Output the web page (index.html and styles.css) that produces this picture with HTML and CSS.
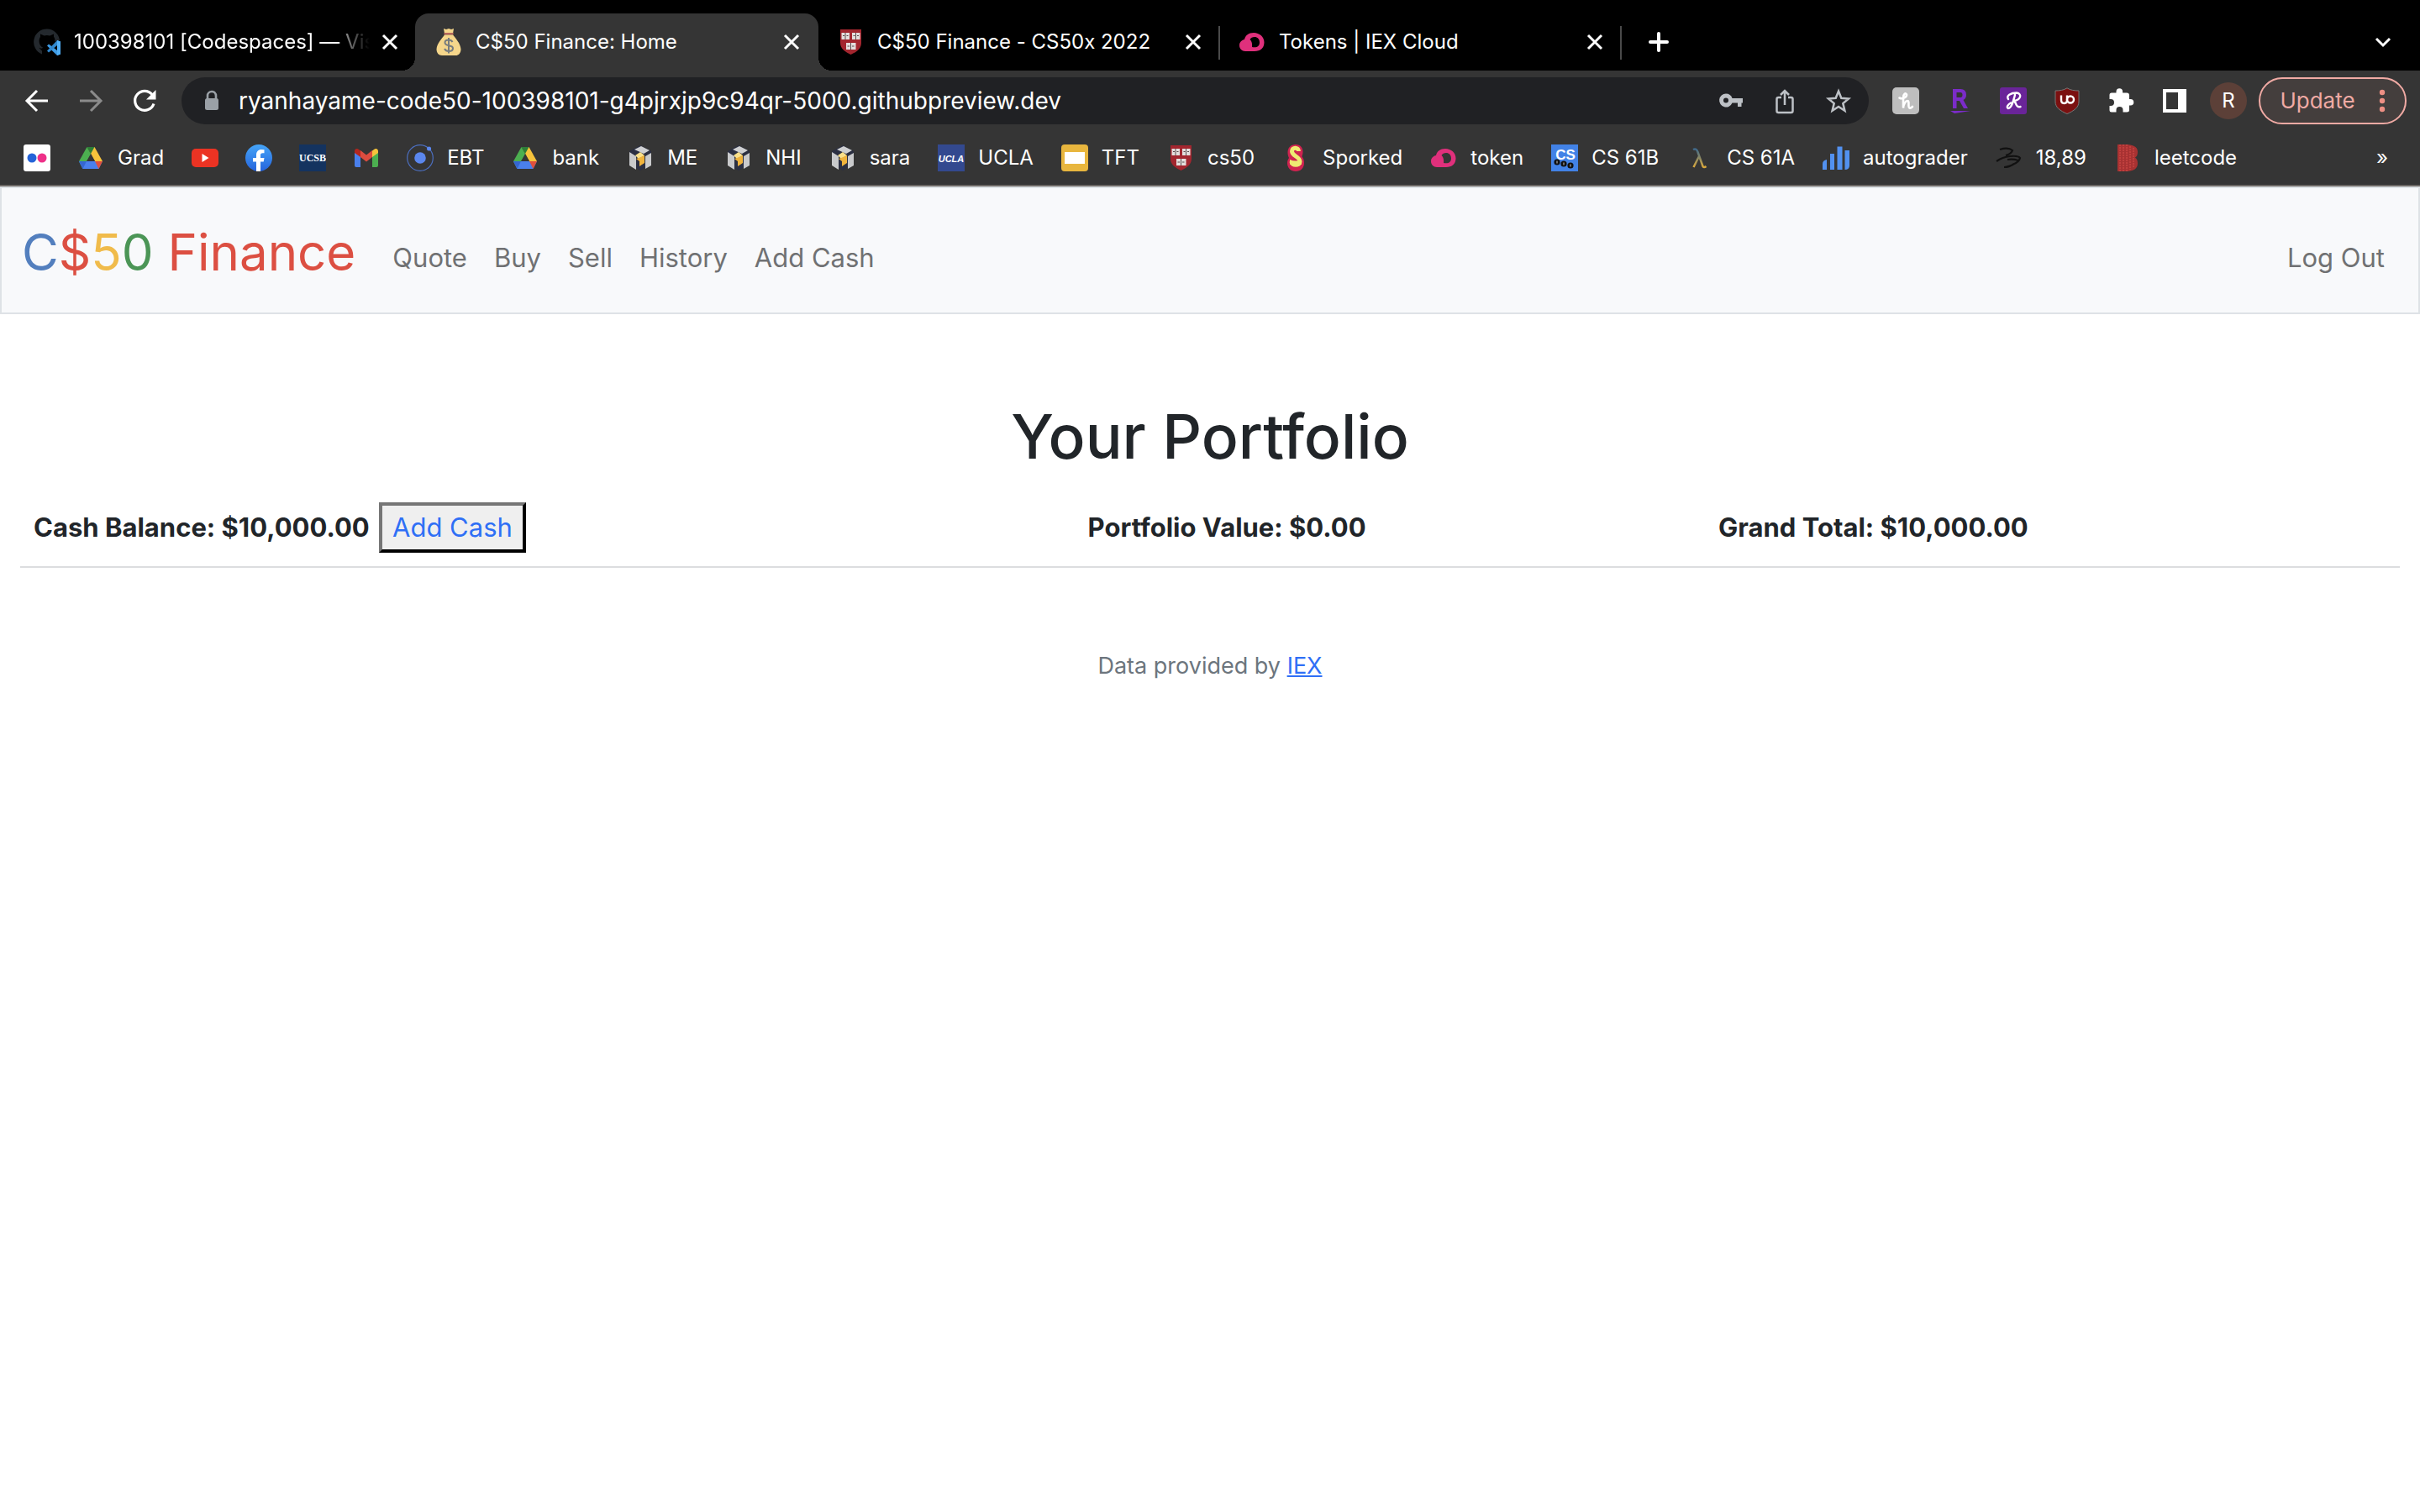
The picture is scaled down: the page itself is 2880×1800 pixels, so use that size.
FILE: index.html
```html
<!DOCTYPE html>
<html lang="en">
<head>
<meta charset="utf-8">
<title>C$50 Finance: Home</title>
<link rel="stylesheet" href="styles.css">
</head>
<body>
<svg class="sprite" aria-hidden="true">
  <symbol id="i-close" viewBox="0 0 32 32"><path d="M8 8l16 16M24 8L8 24" stroke="currentColor" stroke-width="3" fill="none"/></symbol>
  <symbol id="i-drive" viewBox="0 0 32 32"><path d="M11.500 3L2 20l4.500 9L16 11z" fill="#4caf50"/><path d="M20.500 3L30 20H21L12 3z" fill="#f6c33c"/><path d="M11.500 3h9L16 11z" fill="#2c7d37"/><path d="M2 20h28l-4.500 9h-19z" fill="#4a80ec"/><path d="M2 20h9l-4.500 9z" fill="#3566d0"/><path d="M21 20h9l-4.500 9z" fill="#e0503c"/><path d="M16 12l-5 8h10z" fill="#353535"/></symbol>
  <symbol id="i-box" viewBox="0 0 32 32"><path d="M16 1l13 7v15l-13 8-13-8V8z" fill="#2b2f42"/><path d="M3 9l8 5v16l-8-5z" fill="#c9cacc"/><path d="M9 6l8-4 10 5-7 4z" fill="#cfd0d2"/><path d="M22 14l7-4v15l-7 4z" fill="#c9cacc"/><path d="M10 13l6-4 5 4-5 3v3z" fill="#fbe08a"/><path d="M14 16l7-3v9l-6 4v-6l-4-3z" fill="#f0b33c"/></symbol>
  <symbol id="i-shield" viewBox="0 0 32 32"><path d="M4 1h25v16c0 7-6 11-12.500 14C10 28 4 24 4 17z" fill="#a3262f"/><g fill="#e4dedd"><path d="M5.500 5h9.500v8H5.500zM18 5h9.500v8H18zM11 17h11.500v8H11z"/></g><g stroke="#5a4a4c" stroke-width="1" fill="none"><path d="M10 5v8M22.500 5v8M16.500 17v8M7 8.500h2M11.500 8.500h2M19.500 8.500h2M24 8.500h2M12.500 21h2.500M18 21h2.500"/></g></symbol>
  <symbol id="i-iex" viewBox="0 0 32 32"><path d="M18 5c7 0 12.500 5 12.500 11.500S26 27 19 27H8c-4 0-7-3-7-7s3-6.500 6-7C8 8 12 5 18 5zM19 10c-2.500 0-4.500 1-5.500 3 2 2 3 4 2.500 9 6 1 9-1 9-5.500 0-4-2.500-6.500-6-6.500z" fill="#e0307c" fill-rule="evenodd"/></symbol>
</svg>

<header class="browser">
  <div class="tabs">
    <div class="tab">
      <svg class="icon" viewBox="0 0 32 32"><path d="M10 30.500A15.500 15.500 0 1 1 31 14l-6 1c1-2 0-4-1-5V6.500l-4.500 2q-4-1-7 0L8 6.500V10c-3 4-1 11 3 12.500-1 2-3 1-5 0l4 4z" fill="#24292e"/><path d="M28 14l4 1.500v15L28 32 16 20.500l2-2L28 26z" fill="#3d9ae4"/><path d="M28 14v6l-10 8.500-2-2z" fill="#2f86cc"/><path d="M28 14l4 1.500v15L28 32z" fill="#50aef5"/></svg>
      <span class="tab-title fade">100398101 [Codespaces] — Vis</span>
      <button class="tab-close" aria-label="Close tab"><svg class="icon"><use href="#i-close"/></svg></button>
    </div>
    <div class="tab active">
      <svg class="icon" viewBox="0 0 32 32"><path d="M10 0l3 1 3-1 3 1 3-1-1 6H11z" fill="#f5d68b"/><path d="M10.500 5h11v2.500h-11z" fill="#b5655b"/><path d="M11 7.500h10c3 4 9 10 9.500 17 0 5-3 7.500-6 7.500H8c-4 0-6.500-3-6.500-7.500C2 17.500 8 12 11 7.500z" fill="#f5d68b"/><path d="M20.500 16c-1-2-2.500-2.500-4.500-2.500-2.500 0-4.500 1-4.500 3.200 0 5 9.500 2 9.500 6.800 0 2-2 3.500-5 3.500-2.500 0-4-1-5-3M16 11v18.500" fill="none" stroke="#777c7e" stroke-width="2"/></svg>
      <span class="tab-title">C$50 Finance: Home</span>
      <button class="tab-close" aria-label="Close tab"><svg class="icon"><use href="#i-close"/></svg></button>
    </div>
    <div class="tab">
      <svg class="icon"><use href="#i-shield"/></svg>
      <span class="tab-title">C$50 Finance - CS50x 2022</span>
      <button class="tab-close" aria-label="Close tab"><svg class="icon"><use href="#i-close"/></svg></button>
    </div>
    <div class="tab divided">
      <svg class="icon"><use href="#i-iex"/></svg>
      <span class="tab-title">Tokens | IEX Cloud</span>
      <button class="tab-close" aria-label="Close tab"><svg class="icon"><use href="#i-close"/></svg></button>
    </div>
    <button class="new-tab" aria-label="New tab"><svg class="icon" viewBox="0 0 32 32"><path d="M16 6v20M6 16h20" stroke="#fff" stroke-width="4" stroke-linecap="round"/></svg></button>
    <button class="tab-search" aria-label="Search tabs"><svg class="icon" viewBox="0 0 32 32"><path d="M8 12l8 8 8-8" stroke="#fff" stroke-width="3" fill="none"/></svg></button>
  </div>

  <div class="toolbar">
    <div class="tools">
      <button aria-label="Back"><svg class="icon" viewBox="0 0 32 32"><path d="M29 16H5M16 4L4 16l12 12" stroke="#fff" stroke-width="3" fill="none"/></svg></button>
      <button aria-label="Forward"><svg class="icon" viewBox="0 0 32 32"><path d="M3 16h24M16 4l12 12-12 12" stroke="#8b8b8b" stroke-width="3" fill="none"/></svg></button>
      <button aria-label="Reload"><svg class="icon" viewBox="0 0 32 32"><path d="M25 8.500A11.500 11.500 0 1 0 27 19.500" stroke="#fff" stroke-width="3.200" fill="none"/><path d="M29.500 3v11.500H18z" fill="#fff"/></svg></button>
    </div>
    <label class="omnibox">
      <svg class="icon" viewBox="0 0 32 32"><path d="M11 14V10a5 5 0 0 1 10 0V14" stroke="#9aa0a6" stroke-width="2.600" fill="none"/><rect x="8" y="13" width="16" height="14" rx="2.500" fill="#9aa0a6"/></svg>
      <input class="address" type="text" aria-label="Address" value="ryanhayame-code50-100398101-g4pjrxjp9c94qr-5000.githubpreview.dev">
      <span class="tools">
        <button aria-label="Passwords"><svg class="icon" viewBox="0 0 32 32"><path d="M10 7.500a8 8 0 0 1 7.500 5.500H30v5.500h-1.500V23H24v-4.500h-6.500A8 8 0 1 1 10 7.500zm0 5a3 3 0 1 0 0 6 3 3 0 0 0 0-6z" fill="#bdc1c6" fill-rule="evenodd"/></svg></button>
        <button aria-label="Share"><svg class="icon" viewBox="0 0 32 32"><path d="M12 12H8.500Q6.500 12 6.500 14v14q0 2 2 2h15q2 0 2-2V14q0-2-2-2H20M16 21V4.500M11 9l5-5 5 5" stroke="#bdc1c6" stroke-width="2.500" fill="none"/></svg></button>
        <button aria-label="Bookmark this tab"><svg class="icon" viewBox="0 0 32 32"><path d="M16 4.500l3.300 8.200 8.700.7-6.700 5.700 2.100 8.600L16 23l-7.400 4.700 2.100-8.600L4 13.400l8.700-.7z" stroke="#bdc1c6" stroke-width="2.500" fill="none"/></svg></button>
      </span>
    </label>
    <div class="tools">
      <button aria-label="Honey"><svg class="icon" viewBox="0 0 32 32"><rect width="32" height="32" rx="5" fill="#bebebe"/><path d="M8.500 12.500c4 2 9-1 8.500-4-1-2.500-4-1-4 4V24.500c.5-5 3-8.500 5-8.500 3 0 0 7.500 2.500 8.500 1.500.5 2.500-.5 3.500-1.500" stroke="#fff" stroke-width="2.600" fill="none" stroke-linecap="round"/></svg></button>
      <button aria-label="Rakuten"><svg class="icon" viewBox="0 0 32 32"><path d="M8 2h9q7 0 7 7 0 4-3.500 6L26 25h-5l-5-9h-3.500v9H8zm4.500 4v6H17q2.500 0 2.500-3T17 6z" fill="#7b2cc9" fill-rule="evenodd"/><path d="M5 28h24l-19 3z" fill="#7b2cc9"/></svg></button>
      <button aria-label="Rewards"><svg class="icon" viewBox="0 0 32 32"><rect width="32" height="32" rx="3" fill="#6a2499"/><path d="M10 14c-3-4 3-7.500 10-7.500 7 1 5 9-4 9.500 4 0 2 9 8.500 7M18 9c-2 7-4 16-8 16-3-1 0-5 3-6.500" stroke="#fff" stroke-width="2.400" fill="none" stroke-linecap="round"/></svg></button>
      <button aria-label="uBlock Origin"><svg class="icon" viewBox="0 0 32 32"><path d="M16 .8C12 3.500 7 4 2 4v13c0 7 6 11 14 14.500C24 28 30 24 30 17V4c-5 0-10-.5-14-3.200z" fill="#7b1010" stroke="#777" stroke-width="1"/><path d="M9 9.500v5.500q0 4 3.500 4t3.500-4V9.500" stroke="#fff" stroke-width="2.400" fill="none"/><circle cx="20" cy="14.500" r="4" stroke="#fff" stroke-width="2.400" fill="none"/></svg></button>
      <button aria-label="Extensions"><svg class="icon" viewBox="0 0 32 32"><path d="M10.500 6.500V5a3.800 3.800 0 0 1 7.600 0v1.500H23q3 0 3 3v4.500h1.500a3.800 3.800 0 0 1 0 7.600H26V27q0 2.500-3 2.500h-4.500V27a4 4 0 0 0-8 0v2.500H5q-2.500 0-2.500-2.500v-5H4a4 4 0 0 0 0-8H2.500V9q0-2.500 2.500-2.500z" fill="#fff"/></svg></button>
      <button aria-label="Side panel"><svg class="icon" viewBox="0 0 32 32"><path d="M2 2h28v28H2zm4 4v20h14V6z" fill="#fff" fill-rule="evenodd"/></svg></button>
      <button class="avatar" aria-label="Profile">R</button>
    </div>
    <button class="update">Update<svg class="dots" viewBox="0 0 8 28"><circle cx="4" cy="4" r="3.200"/><circle cx="4" cy="14" r="3.200"/><circle cx="4" cy="24" r="3.200"/></svg></button>
  </div>

  <nav class="bookmarks" aria-label="Bookmarks">
    <a href="#" aria-label="Flickr"><svg class="icon" viewBox="0 0 32 32"><rect width="32" height="32" rx="3" fill="#fff"/><circle cx="10" cy="16" r="5.500" fill="#2463d8"/><circle cx="22" cy="16" r="5.500" fill="#ee3088"/></svg></a>
    <a class="named" href="#"><svg class="icon"><use href="#i-drive"/></svg>Grad</a>
    <a href="#" aria-label="YouTube"><svg class="icon" viewBox="0 0 32 32"><rect x="0" y="5" width="32" height="22" rx="5" fill="#eb3323"/><path d="M12.500 11v10l8-5z" fill="#fff"/></svg></a>
    <a href="#" aria-label="Facebook"><svg class="icon" viewBox="0 0 32 32"><defs><linearGradient id="fb" x2="0" y2="1"><stop stop-color="#45a5f8"/><stop offset="1" stop-color="#2563dc"/></linearGradient></defs><circle cx="16" cy="16" r="16" fill="url(#fb)"/><path d="M13 32V20.500H9V16h4v-3.500C13 8.500 15.500 6 19 6l3.500.3v4H20.500c-2 0-2.500 1-2.500 2.500V16h4.500l-.8 4.500H18V32z" fill="#fff"/></svg></a>
    <a href="#" aria-label="UCSB"><svg class="icon" viewBox="0 0 32 32"><rect width="32" height="32" fill="#14335f"/><text class="ucsb" x="16" y="20" text-anchor="middle">UCSB</text></svg></a>
    <a href="#" aria-label="Gmail"><svg class="icon" viewBox="0 0 32 32"><path d="M2 8v17q0 2 2 2h5V13z" fill="#4a80ec"/><path d="M30 8v17q0 2-2 2h-5V13z" fill="#4caf50"/><path d="M9 7l7 5.500L23 7v8l-7 5.500L9 15z" fill="#dc4c3f"/><path d="M2 8c0-3 3-4 5-2l2 1.500V15l-7-5z" fill="#b3261e"/><path d="M30 8c0-3-3-4-5-2l-2 1.500V15l7-5z" fill="#f6c33c"/></svg></a>
    <a class="named" href="#"><svg class="icon" viewBox="0 0 32 32"><circle cx="16" cy="16" r="15.300" fill="none" stroke="#4c6fc0" stroke-width="1.200"/><circle cx="16" cy="16" r="6.800" fill="#5b87ee"/><circle cx="26.500" cy="5" r="2.600" fill="#5b87ee"/></svg>EBT</a>
    <a class="named" href="#"><svg class="icon"><use href="#i-drive"/></svg>bank</a>
    <a class="named" href="#"><svg class="icon"><use href="#i-box"/></svg>ME</a>
    <a class="named" href="#"><svg class="icon"><use href="#i-box"/></svg>NHI</a>
    <a class="named" href="#"><svg class="icon"><use href="#i-box"/></svg>sara</a>
    <a class="named" href="#"><svg class="icon" viewBox="0 0 32 32"><rect width="32" height="32" fill="#33498f"/><text class="ucla" x="16" y="21" text-anchor="middle">UCLA</text></svg>UCLA</a>
    <a class="named" href="#"><svg class="icon" viewBox="0 0 32 32"><rect width="32" height="32" rx="4" fill="#e8b63e"/><path d="M4 9h24v14H4z" fill="#fff"/></svg>TFT</a>
    <a class="named" href="#"><svg class="icon"><use href="#i-shield"/></svg>cs50</a>
    <a class="named" href="#"><svg class="icon" viewBox="0 0 32 32"><path d="M16 0c6 0 8.500 4 8.500 9 0 3-1 4-1 5.500 1.500 2 2.500 3.500 2.500 7.500 0 6-4 10-10 10S6 28 6 22c0-3 1-4.500 2-6-1-2-1.500-4-1.500-6.500C6.500 4 10 0 16 0z" fill="#cf2350"/><path d="M19.500 8c0-5-8-5-8 0 0 6 9.500 6 9.500 12.500 0 5-10 5-10 0" fill="none" stroke="#eeea72" stroke-width="5"/><path d="M9 18q7 3 14 0v5.500q-6 5-14 0z" fill="#eeea72"/></svg>Sporked</a>
    <a class="named" href="#"><svg class="icon"><use href="#i-iex"/></svg>token</a>
    <a class="named" href="#"><svg class="icon" viewBox="0 0 32 32"><rect width="32" height="32" fill="#4282e6"/><text class="cs" x="17" y="18" text-anchor="middle">CS</text><g fill="#111"><circle cx="7" cy="21" r="3.600"/><circle cx="15" cy="23" r="3.600"/><circle cx="23" cy="25" r="3.600"/></g><path d="M7 19.500v3M15 21.500v3M23 23.500v3" stroke="#ccc"/></svg>CS 61B</a>
    <a class="named" href="#"><svg class="icon" viewBox="0 0 32 32"><defs><linearGradient id="lam" x2="0" y2="1"><stop stop-color="#3f6a8c"/><stop offset="1" stop-color="#d9a83c"/></linearGradient></defs><path d="M8 6q4-2 5.500 3l6 17q1.500 2 4 0M15 14L8.500 27" fill="none" stroke="url(#lam)" stroke-width="2.500"/></svg>CS 61A</a>
    <a class="named" href="#"><svg class="icon" viewBox="0 0 32 32"><path d="M0 30V23q0-4 5-5v12zM9 11h5v19H9zM17.500 2.500h6V30h-6zM26.500 7h5.500v18q0 5-5.500 5z" fill="#5291f0"/></svg>autograder</a>
    <a class="named" href="#"><svg class="icon" viewBox="0 0 32 32"><path d="M5 6q10-3 15 1-1 4-8 6M1 20q7-5 16-6 10-1 12 2-1 5-9 8M10 27q6 0 12-4M14 18q7-1 13 1" fill="none" stroke="#111" stroke-width="2.200"/></svg>18,89</a>
    <a class="named" href="#"><svg class="icon" viewBox="0 0 32 32"><path d="M4 0h12q12 1 12 9 0 5-3 6.500 3 2 3 7Q28 31 16 32H4z" fill="#a83232"/><path d="M7 0v32M11 0v32M15 0v32M19 2v28M23 4v24" stroke="#d04a46" stroke-width="1.200" stroke-dasharray="2 1"/></svg>leetcode</a>
    <button class="more" aria-label="More bookmarks">»</button>
  </nav>
</header>

<nav class="navbar" aria-label="Site">
  <a class="brand" href="#"><span class="blue">C</span><span class="red">$</span><span class="yellow">5</span><span class="green">0</span> <span class="red">Finance</span></a>
  <a href="#">Quote</a>
  <a href="#">Buy</a>
  <a href="#">Sell</a>
  <a href="#">History</a>
  <a href="#">Add Cash</a>
  <a class="logout" href="#">Log Out</a>
</nav>

<main>
  <h1>Your Portfolio</h1>
  <table class="totals">
    <tr>
      <th class="cash">Cash Balance: $10,000.00 <button class="add-cash">Add Cash</button></th>
      <th class="value">Portfolio Value: $0.00</th>
      <th>Grand Total: $10,000.00</th>
    </tr>
  </table>
</main>
<footer>Data provided by <a href="#">IEX</a></footer>
</body>
</html>
```
FILE: styles.css
```css
* { box-sizing: border-box; }
body {
  margin: 0;
  background: #fff;
  color: #212529;
  font: 31px/48px Inter, "Liberation Sans", sans-serif;
  font-variant-ligatures: no-contextual;
}
button, input { font: inherit; color: inherit; font-variant-ligatures: inherit; }
.sprite { display: none; }
.icon { width: 32px; height: 32px; flex: none; display: block; }

/* browser frame */
.browser {
  background: #353535;
  color: #fff;
  border-bottom: 2px solid #6b6763;
  font-size: 24px;
  line-height: 32px;
}
.browser button {
  background: none;
  border: 0;
  padding: 0;
  display: flex;
  align-items: center;
  justify-content: center;
}
.tabs {
  display: flex;
  align-items: stretch;
  height: 84px;
  padding: 16px 28px 0 16px;
  background: #000;
}
.tab {
  position: relative;
  display: flex;
  align-items: center;
  gap: 16px;
  flex: 0 1 478px;
  min-width: 0;
  padding: 0 14px 0 24px;
}
.tab-title {
  flex: 1;
  min-width: 0;
  overflow: hidden;
  white-space: nowrap;
}
.fade { mask-image: linear-gradient(to right, #000 89%, #0008 92%, transparent); }
.tab-close { width: 32px; margin-left: -8px; }
.tab.active {
  flex-basis: 480px;
  margin-right: -2px;
  padding-right: 16px;
  background: #353535;
  border-radius: 16px 16px 0 0;
}
.active::before, .active::after {
  content: "";
  position: absolute;
  bottom: 0;
  width: 16px;
  height: 16px;
}
.active::before { right: 100%; background: radial-gradient(circle at 0 0, #000 16px, #353535 16px); }
.active::after { left: 100%; background: radial-gradient(circle at 100% 0, #000 16px, #353535 16px); }
.divided::before, .divided::after {
  content: "";
  position: absolute;
  top: 15px;
  width: 2px;
  height: 40px;
  background: #4a4a4a;
}
.divided::before { left: 0; }
.divided::after { left: 100%; }
.new-tab { margin-left: 30px; }
.tab-search { margin-left: auto; }

.toolbar {
  display: flex;
  align-items: center;
  gap: 28px;
  padding: 8px 16px 8px 28px;
}
.tools { display: flex; align-items: center; gap: 32px; }
.omnibox {
  flex: 1;
  display: flex;
  align-items: center;
  gap: 16px;
  height: 56px;
  padding: 0 20px;
  border-radius: 28px;
  background: #202124;
}
.address {
  flex: 1;
  min-width: 0;
  border: 0;
  padding: 0;
  background: none;
  font-size: 28px;
  line-height: 40px;
}
.browser .avatar {
  width: 44px;
  height: 44px;
  margin: 0 -6px;
  border-radius: 50%;
  background: #5c4038;
}
.browser .update {
  height: 56px;
  width: 176px;
  margin-left: -8px;
  gap: 28px;
  border: 2px solid #f0aaa4;
  border-radius: 28px;
  background: #443e3d;
  color: #f0aaa4;
  font-size: 26px;
}
.dots { width: 8px; height: 28px; fill: #ee8f84; }

.bookmarks {
  display: flex;
  align-items: center;
  gap: 32px;
  height: 64px;
  padding: 0 38px 0 28px;
}
.bookmarks a {
  display: flex;
  align-items: center;
  gap: 16px;
  color: #fff;
  text-decoration: none;
  white-space: nowrap;
}
.bookmarks .named { padding-right: 1px; }
.bookmarks .more { margin-left: auto; }
.ucsb { font: bold 12px "Liberation Serif", serif; fill: #fff; }
.ucla { font: italic bold 11px "Liberation Sans", sans-serif; fill: #fff; }
.cs { font: bold 17px "Liberation Sans", sans-serif; fill: #fff; }

/* page */
.navbar {
  display: flex;
  align-items: center;
  gap: 32px;
  padding: 28px 40px 24px 24px;
  border: 2px solid #dee2e6;
  background: #f8f9fb;
}
.navbar a { color: #707173; text-decoration: none; padding-top: 14px; }
.navbar .brand { font-size: 60px; line-height: 96px; margin-right: 12px; padding: 0; }
.navbar .blue { color: #537fbe; }
.navbar .red { color: #dc4f42; }
.navbar .yellow { color: #f0bb4b; }
.navbar .green { color: #4b9556; }
.navbar .logout { margin-left: auto; }

main { padding: 98px 24px 0; }
h1 {
  margin: 0 0 14px;
  font-size: 73px;
  line-height: 96px;
  font-weight: 500;
  text-align: center;
}
.totals { width: 100%; border-collapse: collapse; }
th {
  padding: 16px;
  border-bottom: 2px solid #dcdddf;
  text-align: left;
  white-space: nowrap;
}
.cash { width: 44.3%; }
.value { width: 26.5%; }
.add-cash {
  margin-left: 4px;
  padding: 2px 12px;
  border: 4px outset #000;
  border-color: #767676 #212121 #212121 #767676;
  background: #efefef;
  color: #2f6ff6;
  font-weight: 400;
}
footer {
  padding: 96px 24px;
  color: #6c757d;
  font-size: 27px;
  line-height: 42px;
  text-align: center;
}
footer a { color: #2f6ff6; }
```
